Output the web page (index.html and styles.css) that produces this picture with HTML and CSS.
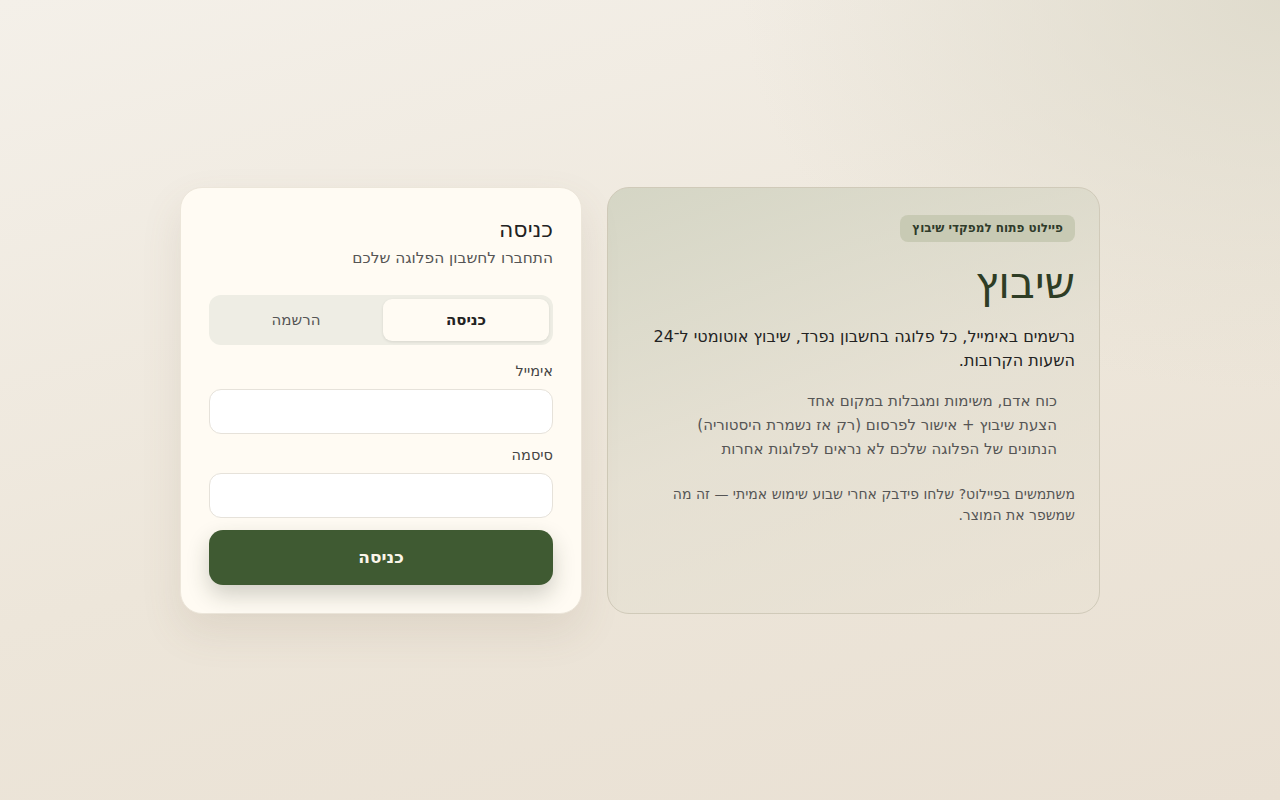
FILE: index.html
```html
<!DOCTYPE html>
<html lang="he" dir="rtl">
<head>
<meta charset="utf-8">
<title>שיבוץ — כניסה</title>
<link rel="stylesheet" href="styles.css">
</head>
<body>
<main class="page">
  <div class="layout">
    <section class="info">
      <span class="badge">פיילוט פתוח למפקדי שיבוץ</span>
      <h1 class="brand">שיבוץ</h1>
      <p class="lead">נרשמים באימייל, כל פלוגה בחשבון נפרד, שיבוץ אוטומטי ל־24 השעות הקרובות.</p>
      <ul class="points">
        <li>כוח אדם, משימות ומגבלות במקום אחד</li>
        <li>הצעת שיבוץ + אישור לפרסום (רק אז נשמרת היסטוריה)</li>
        <li>הנתונים של הפלוגה שלכם לא נראים לפלוגות אחרות</li>
      </ul>
      <p class="note">משתמשים בפיילוט? שלחו פידבק אחרי שבוע שימוש אמיתי — זה מה שמשפר את המוצר.</p>
    </section>
    <section class="card">
      <h2 class="card-title">כניסה</h2>
      <p class="card-sub">התחברו לחשבון הפלוגה שלכם</p>
      <div class="tabs">
        <button class="tab active" type="button">כניסה</button>
        <button class="tab" type="button">הרשמה</button>
      </div>
      <form class="form">
        <label class="field">
          <span class="label">אימייל</span>
          <input class="input" type="email">
        </label>
        <label class="field">
          <span class="label">סיסמה</span>
          <input class="input" type="password">
        </label>
        <button class="submit" type="button">כניסה</button>
      </form>
    </section>
  </div>
</main>
</body>
</html>
```
FILE: styles.css
```css
* { box-sizing: border-box; }
html, body { margin: 0; height: 100%; }
body {
  font-family: "DejaVu Sans", sans-serif;
  color: #222;
  background:
    radial-gradient(ellipse 60% 70% at 100% 0%, rgba(222, 218, 203, 0.9), rgba(222, 218, 203, 0) 70%),
    linear-gradient(165deg, #f4f0e9 0%, #ede6da 55%, #e9e0d3 100%);
  min-height: 100vh;
}
.page {
  min-height: 100vh;
  display: flex;
  align-items: center;
  justify-content: center;
}
.layout {
  display: flex;
  gap: 25px;
  align-items: stretch;
}
.info {
  width: 493px;
  height: 427px;
  padding: 27px 24px 24px;
  border-radius: 22px;
  border: 1px solid #d0cab9;
  background: linear-gradient(160deg, rgba(208, 210, 192, 0.85) 0%, rgba(226, 222, 208, 0.7) 50%, rgba(233, 226, 212, 0.6) 100%);
  display: flex;
  flex-direction: column;
  align-items: flex-start;
}
.badge {
  display: inline-block;
  background: #c8cab4;
  color: #2f3b2a;
  font-size: 12px;
  font-weight: 700;
  padding: 5px 12px;
  border-radius: 8px;
  line-height: 17px;
}
.brand {
  margin: 15px 0 0;
  font-size: 43px;
  font-weight: 400;
  color: #2e3d25;
  line-height: 52px;
}
.lead {
  margin: 16px 0 0;
  font-size: 16px;
  line-height: 24px;
  color: #222;
}
.points {
  list-style: none;
  margin: 16px 0 0;
  padding: 0 18px 0 0;
  font-size: 15px;
  line-height: 24px;
  color: #555;
}
.note {
  margin: 23px 0 0;
  font-size: 14px;
  line-height: 21px;
  color: #555;
}
.card {
  width: 402px;
  height: 427px;
  padding: 27px 28px 28px;
  border-radius: 22px;
  border: 1px solid #ece6da;
  background: #fffbf3;
  box-shadow: 0 18px 40px rgba(120, 100, 70, 0.12);
}
.card-title {
  margin: 0;
  font-size: 22px;
  font-weight: 400;
  line-height: 30px;
  color: #222;
}
.card-sub {
  margin: 1px 0 0;
  font-size: 15.4px;
  line-height: 24px;
  color: #555;
}
.tabs {
  margin-top: 25px;
  display: flex;
  gap: 4px;
  padding: 4px;
  background: #eeede4;
  border-radius: 12px;
  height: 50px;
}
.tab {
  flex: 1;
  border: 0;
  background: transparent;
  font-family: inherit;
  font-size: 15px;
  color: #555;
  border-radius: 9px;
  cursor: pointer;
}
.tab.active {
  background: #fffbf3;
  color: #222;
  font-weight: 700;
  box-shadow: 0 1px 3px rgba(0, 0, 0, 0.1);
}
.form {
  display: flex;
  flex-direction: column;
  margin-top: 17px;
}
.field {
  display: flex;
  flex-direction: column;
  margin-bottom: 12px;
}
.label {
  font-size: 14.5px;
  line-height: 19px;
  color: #444;
  margin-bottom: 8px;
}
.input {
  height: 45px;
  border: 1px solid #e6e2da;
  border-radius: 12px;
  background: #fff;
  font-family: inherit;
  font-size: 15px;
  padding: 0 12px;
}
.submit {
  height: 55px;
  border: 0;
  border-radius: 14px;
  background: #3f5a32;
  color: #fbf6ea;
  font-family: inherit;
  font-size: 17px;
  font-weight: 700;
  box-shadow: 0 10px 22px rgba(40, 50, 30, 0.22);
  cursor: pointer;
}
```
